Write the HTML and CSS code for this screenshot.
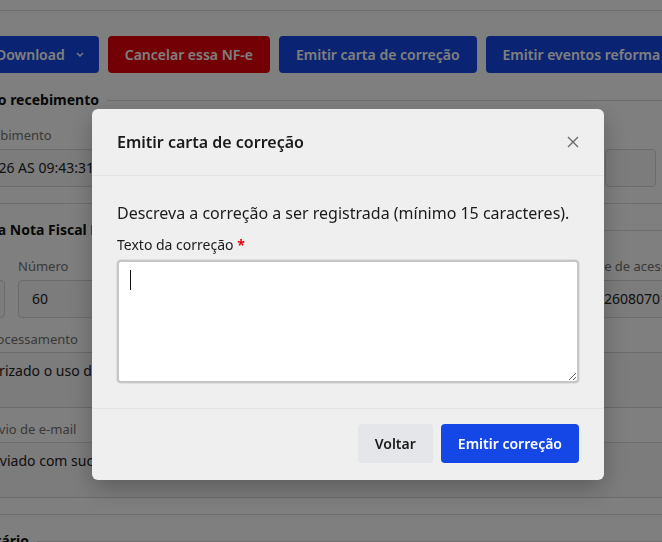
FILE: index.html
```html
<!DOCTYPE html>
<html lang="pt-BR">
<head>
  <meta charset="UTF-8">
  <title>NF-e</title>
  <link rel="stylesheet" href="styles.css">
</head>

<body>

  <div class="page">
    <div class="topline"></div>

    <div class="actions">
      <button class="btn btn-blue btn-icon">
        <svg width="14" height="14" viewBox="0 0 14 14"><path d="M9 2 4 7l5 5" fill="none" stroke="#fff" stroke-width="1.6"/></svg>
      </button>
      <button class="btn btn-blue btn-drop">Download
        <svg width="8" height="5" viewBox="0 0 8 5"><path d="M1 1l3 3 3-3" fill="none" stroke="#fff" stroke-width="1.3"/></svg>
      </button>
      <button class="btn btn-red">Cancelar essa NF-e</button>
      <button class="btn btn-blue">Emitir carta de correção</button>
      <button class="btn btn-blue">Emitir eventos reforma</button>
    </div>

    <section class="group">
      <h3 class="group-title">Dados do recebimento</h3>
      <div class="row row-receb">
        <div class="field">
          <label>Data recebimento</label>
          <div class="box">07/01/26 AS 09:43:31</div>
        </div>
        <div class="field">
          <label>Protocolo</label>
          <div class="box">135260000012345</div>
        </div>
        <div class="field">
          <label>&nbsp;</label>
          <div class="box"></div>
        </div>
      </div>
    </section>

    <section class="group">
      <h3 class="group-title">Dados da Nota Fiscal Eletrônica</h3>
      <div class="row row-nota">
        <div class="field">
          <label>Série</label>
          <div class="box">1</div>
        </div>
        <div class="field">
          <label>Número</label>
          <div class="box">60</div>
        </div>
        <div class="field">
          <label>Data de emissão</label>
          <div class="box">07/01/2026 09:40:12</div>
        </div>
        <div class="field">
          <label>Chave de acesso</label>
          <div class="box">35260807012345000199550010000000601000000601</div>
        </div>
      </div>
      <div class="field field-wide">
        <label>Status processamento</label>
        <div class="box box-wide">Autorizado o uso da NF-e</div>
      </div>
      <div class="field field-wide">
        <label>Status envio de e-mail</label>
        <div class="box box-wide">Já enviado com sucesso</div>
      </div>
    </section>

    <h3 class="group-title">Destinatário</h3>
  </div>

  <div class="overlay">
    <div class="modal">
      <div class="modal-header">
        <h3>Emitir carta de correção</h3>
        <button class="close-btn">
          <svg width="12" height="12" viewBox="0 0 12 12"><path d="M1 1l10 10M11 1 1 11" stroke="#6b6b6b" stroke-width="1.4"/></svg>
        </button>
      </div>
      <div class="modal-body">
        <p>Descreva a correção a ser registrada (mínimo 15 caracteres).</p>
        <label class="modal-label">Texto da correção <span class="req">*</span></label>
        <div class="text-wrap">
          <textarea class="correction"></textarea>
          <span class="caret"></span>
        </div>
      </div>
      <div class="modal-footer">
        <button class="btn-back">Voltar</button>
        <button class="btn-send">Emitir correção</button>
      </div>
    </div>
  </div>

</body>
</html>
```

FILE: styles.css
```css
* {
  box-sizing: border-box;
}
body {
  margin: 0;
  height: 542px;
  overflow: hidden;
  background: #fff;
  color: #222;
  font-family: "Noto Sans", "Open Sans", sans-serif;
}

/* pagina de fundo */
.page {
  width: 780px;
  margin-left: -58px;
}
.topline {
  height: 11px;
  border-bottom: 1px solid #dcdcdc;
}
.actions {
  display: flex;
  gap: 9px;
  margin-top: 25px;
}
.btn {
  display: flex;
  align-items: center;
  gap: 12px;
  height: 37px;
  padding: 0 17px;
  border: none;
  border-radius: 4px;
  color: #fff;
  font: 600 14px "Noto Sans", sans-serif;
  white-space: nowrap;
}
.btn-icon {
  width: 28px;
  padding: 0;
  justify-content: center;
}
.btn-drop {
  gap: 11px;
  padding: 0 15px 0 17px;
}
.btn-blue {
  background: #1447e6;
}
.btn-red {
  background: #e7000b;
}
.group {
  padding-bottom: 16px;
  border-bottom: 1px solid #dcdcdc;
}
.group-title {
  display: flex;
  align-items: center;
  gap: 8px;
  margin: 17px 0 0;
  font-size: 14px;
  font-weight: 700;
  line-height: 20px;
  color: #111;
}
.group + .group .group-title,
.group + .group-title {
  margin-top: 16px;
}
.group-title::after {
  content: "";
  flex: 1;
  height: 1px;
  background: #dcdcdc;
}
.row {
  display: grid;
  margin-top: 16px;
}
.row-receb {
  grid-template-columns: 290px 349px 51px;
  gap: 12px;
}
.row-nota {
  grid-template-columns: 63px 120px 410px 330px;
  gap: 13px;
  margin-top: 17px;
}
.field {
  display: flex;
  flex-direction: column;
  gap: 5px;
}
.field label {
  font-size: 13px;
  line-height: 18px;
  color: #737373;
  white-space: nowrap;
  overflow: hidden;
}
.box {
  height: 38px;
  padding: 0 13px;
  border: 1px solid #d6d6d6;
  border-radius: 4px;
  background: #f8f8f8;
  font-size: 14px;
  line-height: 36px;
  color: #222;
  white-space: nowrap;
  overflow: hidden;
}
.field-wide {
  gap: 4px;
  margin-top: 12px;
}
.box-wide {
  height: 56px;
  padding: 8px 25px;
  line-height: 20px;
}

/* modal */
.overlay {
  position: fixed;
  top: 0; left: 0;
  width: 100%; height: 100%;
  background: rgba(0, 0, 0, 0.5);
  padding: 109px 0 0 92px;
}
.modal {
  width: 512px;
  background: #efefef;
  border-radius: 6px;
  box-shadow: 0 8px 24px rgba(0,0,0,0.25);
  color: #1b1b1b;
}
.modal-header {
  display: flex;
  align-items: center;
  justify-content: space-between;
  height: 67px;
  padding: 0 25px;
  border-bottom: 1px solid #e4e4e4;
}
.modal-header h3 {
  margin: 0;
  font-size: 16px;
  font-weight: 600;
}
.close-btn {
  display: flex;
  align-items: center;
  justify-content: center;
  width: 32px;
  height: 32px;
  margin-right: -10px;
  border: none;
  background: none;
  padding: 0;
}
.modal-body {
  padding: 25px;
}
.modal-body p {
  margin: 0;
  font-size: 16px;
  line-height: 24px;
}
.modal-label {
  display: block;
  margin-top: 10px;
  font-size: 14px;
  line-height: 20px;
}
.req {
  color: #e7000b;
  font-weight: 700;
}
.text-wrap {
  position: relative;
  margin-top: 5px;
}
.correction {
  display: block;
  width: 100%;
  height: 123px;
  padding: 8px 11px;
  border: 2px solid #c6c6c6;
  border-radius: 4px;
  box-shadow: 0 0 0 1px #e0e0e0;
  background: #fff;
  font: 14px "Noto Sans", sans-serif;
  resize: vertical;
  outline: none;
}
.caret {
  position: absolute;
  left: 13px;
  top: 10px;
  width: 1px;
  height: 20px;
  background: #111;
}
.modal-footer {
  display: flex;
  justify-content: flex-end;
  gap: 8px;
  padding: 15px 25px 17px;
  border-top: 1px solid #e4e4e4;
}
.btn-back,
.btn-send {
  height: 39px;
  padding: 0 17px;
  border: none;
  border-radius: 4px;
  font: 600 14px "Noto Sans", sans-serif;
}
.btn-back {
  background: #e5e6ea;
  color: #1b1b1b;
}
.btn-send {
  background: #1447e6;
  color: #fff;
}
```
